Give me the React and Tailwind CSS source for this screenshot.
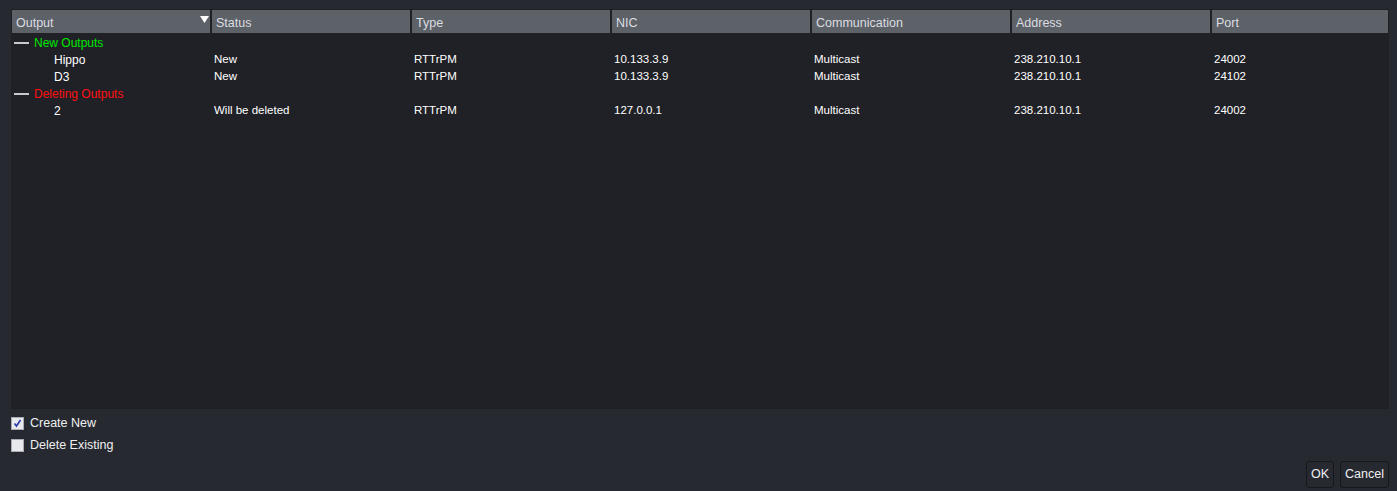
import React from "react";

const cols = [
  { name: "Output", w: "w-[198px]" },
  { name: "Status", w: "w-[198px]" },
  { name: "Type", w: "w-[198px]" },
  { name: "NIC", w: "w-[198px]" },
  { name: "Communication", w: "w-[198px]" },
  { name: "Address", w: "w-[198px]" },
  { name: "Port", w: "w-[176px]" },
];

const groups = [
  {
    label: "New Outputs",
    color: "text-[#00e600]",
    rows: [
      ["Hippo", "New", "RTTrPM", "10.133.3.9", "Multicast", "238.210.10.1", "24002"],
      ["D3", "New", "RTTrPM", "10.133.3.9", "Multicast", "238.210.10.1", "24102"],
    ],
  },
  {
    label: "Deleting Outputs",
    color: "text-[#ff1010]",
    rows: [["2", "Will be deleted", "RTTrPM", "127.0.0.1", "Multicast", "238.210.10.1", "24002"]],
  },
];

function Row({ cells }) {
  return (
    <div className="flex h-[17px] items-center text-[11.5px] text-white">
      <div className="w-[200px] shrink-0 pl-[42px] text-[12px]">{cells[0]}</div>
      {cells.slice(1, 6).map((c, i) => (
        <div key={i} className="w-[200px] shrink-0 pl-[2px]">
          {c}
        </div>
      ))}
      <div className="w-[176px] shrink-0 pl-[2px]">{cells[6]}</div>
    </div>
  );
}

function Check({ checked, label }) {
  return (
    <div className="flex items-center h-[13px] gap-[6px]">
      <div className="w-[13px] h-[13px] shrink-0 border border-[#a9acb2] bg-[#e8e9ec] flex items-center justify-center">
        {checked && (
          <svg width="9" height="9" viewBox="0 0 9 9">
            <path d="M1.5 4.5 L3.5 7 L7.5 1" stroke="#2f3ea8" strokeWidth="1.7" fill="none" />
          </svg>
        )}
      </div>
      <span className="text-[12.5px] text-[#f0f0f0] leading-none">{label}</span>
    </div>
  );
}

export default function App() {
  return (
    <div
      className="w-[1397px] h-[491px] bg-[#262930] pt-[9px] pl-[11px] pr-[8px] flex flex-col"
      style={{ fontFamily: '"Liberation Sans", Arial, sans-serif' }}
    >
      <div className="h-[400px] shrink-0 bg-[#1f2126] pt-[1px] pl-[1px]">
        <div className="flex gap-[2px] h-[23px]">
          {cols.map((c, i) => (
            <div
              key={c.name}
              className={`${c.w} shrink-0 bg-[#5d6168] text-[12.5px] text-[#dcdde0] pl-[4px] pt-[4px] flex items-center relative`}
            >
              {c.name}
              {i === 0 && (
                <svg className="absolute right-[1px] top-[6px]" width="9" height="7" viewBox="0 0 9 7">
                  <path d="M0 0 H9 L4.5 7 Z" fill="#ffffff" />
                </svg>
              )}
            </div>
          ))}
        </div>
        <div className="pt-[1px]">
          {groups.map((g) => (
            <div key={g.label}>
              <div className="flex h-[17px] items-center">
                <div className="w-[15px] h-[2px] bg-[#c5c9d0] ml-[2px] mr-[5px]" />
                <span className={`text-[12px] ${g.color}`}>{g.label}</span>
              </div>
              {g.rows.map((r, i) => (
                <Row key={i} cells={r} />
              ))}
            </div>
          ))}
        </div>
      </div>
      <div className="flex flex-col gap-[9px] mt-[8px]">
        <Check checked label="Create New" />
        <Check label="Delete Existing" />
      </div>
      <div className="flex justify-end gap-[6px] mt-[9px]">
        <button className="h-[27px] px-[4px] border border-[#16181c] rounded-[3px] bg-[#262930] text-[12.5px] text-[#f0f0f0]">
          OK
        </button>
        <button className="h-[27px] px-[4px] border border-[#16181c] rounded-[3px] bg-[#262930] text-[12.5px] text-[#f0f0f0]">
          Cancel
        </button>
      </div>
    </div>
  );
}
